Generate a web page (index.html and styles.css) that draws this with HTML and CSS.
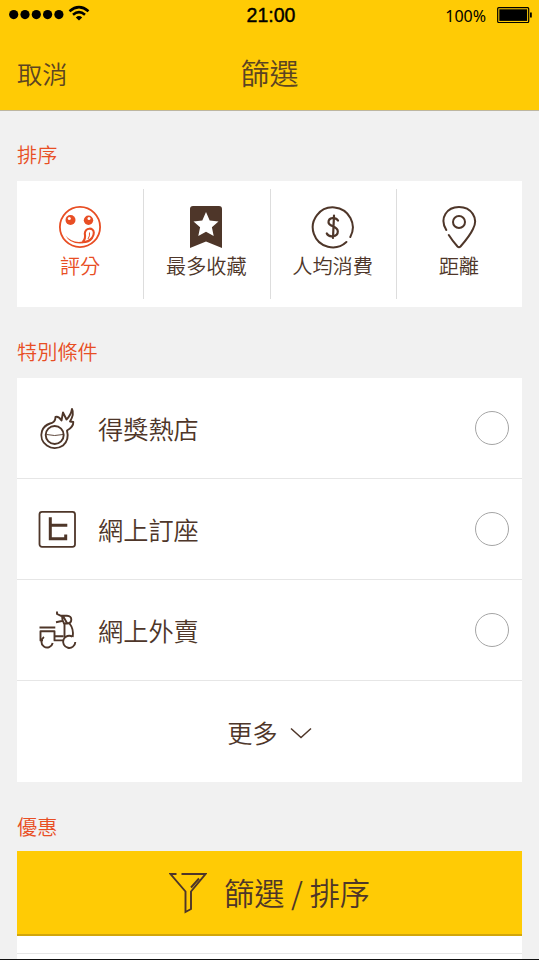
FILE: index.html
```html
<!DOCTYPE html>
<html lang="zh-Hant">
<head>
<meta charset="utf-8">
<title>篩選</title>
<link rel="stylesheet" href="styles.css">
</head>
<body>
<div class="screen">
  <header class="header">
    <div class="status">
      <div class="signal">
        <svg width="84" height="20" viewBox="0 0 84 20">
          <g fill="#000"><circle cx="13.7" cy="14.600" r="4.600"/><circle cx="25" cy="14.600" r="4.600"/><circle cx="36.300" cy="14.600" r="4.600"/><circle cx="47.600" cy="14.600" r="4.600"/><circle cx="58.900" cy="14.600" r="4.600"/></g>
        </svg>
        <svg class="wifi" width="22" height="17" viewBox="0 0 22 17" fill="none" stroke="#000" stroke-width="2.600"><path d="M1.500 6.200Q11-2 20.500 6.200M5 9.700Q11 4.500 17 9.700"/><path d="M11 15.400L7.800 12.400Q11 9.800 14.200 12.400Z" fill="#000" stroke="none"/></svg>
      </div>
      <div class="time">21:00</div>
      <div class="power"><span>100%</span>
        <svg width="35" height="17" viewBox="0 0 35 17"><rect x=".7" y=".7" width="31" height="14.800" rx="1" fill="none" stroke="#000" stroke-width="1.200"/><rect x="2.300" y="2.300" width="27.800" height="11.600" fill="#000"/><path d="M33 5.500h1.800v5H33z"/></svg>
      </div>
    </div>
    <div class="nav"><a class="cancel">取消</a><h1>篩選</h1></div>
  </header>

  <h2>排序</h2>
  <div class="card sorts">
    <div class="sort active">
      <svg width="44" height="44" viewBox="0 0 44 44" fill="none" stroke="currentColor">
        <circle cx="22" cy="22" r="20.100" stroke-width="1.800"/>
        <g fill="currentColor" stroke="none"><circle cx="12.500" cy="15" r="5"/><circle cx="30.500" cy="15.300" r="4.700"/></g>
        <g fill="#fff" stroke="none"><circle cx="11.300" cy="13.400" r="1.500"/><circle cx="31" cy="13.400" r="1.500"/></g>
        <path d="M24.500 37.300Q31 37 34 33Q36 30 35.800 27.500C35.500 22 27.300 22.500 26.800 28.500Q28 34 24.500 37" stroke-width="2.100"/>
        <path d="M7.500 30.500Q14 38.500 25 36.500V38.300Q12 39.500 7.500 30.500Z" fill="currentColor" stroke="none"/><path d="M31.500 27.500Q32 31 30 34" stroke-width="1"/>
      </svg><span>評分</span>
    </div>
    <div class="sort">
      <svg width="44" height="44" viewBox="0 0 44 44"><path d="M6 4Q6 1 9 1H35Q38 1 38 4V43L22 36.500L6 43Z" fill="#4e3629"/><path d="M22 7L25.700 15.600L34.500 16.500L27.900 22.300L29.700 31L22 26.800L14.300 31L16.100 22.300L9.500 16.500L18.300 15.600Z" fill="#fff"/></svg><span>最多收藏</span>
    </div>
    <div class="sort">
      <svg width="44" height="44" viewBox="0 0 44 44" fill="none" stroke="currentColor" stroke-width="2" stroke-linecap="round"><path d="M39.300 32A20 20 0 1 0 35.400 37"/><path d="M27 15.500C25 12 17.500 12 17.500 17.300C17.500 22.200 26.800 20.500 26.800 26.500C26.800 32.500 17.500 32.500 15.800 28.500M23 10.500L22 33" stroke-width="2.200"/></svg><span>人均消費</span>
    </div>
    <div class="sort">
      <svg width="44" height="44" viewBox="0 0 44 44" fill="none" stroke="currentColor" stroke-width="2" stroke-linecap="round"><path d="M9.300 25C2 13 10 2 22 2C34 2 42 13 36 24C33 30.500 27 37.500 23.500 41.500Q22 43 20.500 41.500Q15.500 36 11.800 30"/><circle cx="22" cy="17" r="6"/></svg><span>距離</span>
    </div>
  </div>

  <h2 class="second">特別條件</h2>
  <div class="card">
    <div class="row">
      <svg width="40" height="44" viewBox="0 0 40 44" fill="none" stroke="currentColor" stroke-width="1.900" stroke-linejoin="round"><circle cx="16.700" cy="29" r="9"/><path d="M12 17.500Q17.500 16.500 17.500 11Q20.500 10 23.500 14.500L25 6.500L28.500 13.500Q33 9 34 3Q36.500 8 32 15.500L35.300 16Q35.500 21 29 24.500Q31.500 34 25 39.500C14 47 0 37 4 25Q6 19.500 12 17.500Z"/><path d="M8.500 28.500Q16.500 30.500 25 28.500" stroke-width=".9"/></svg>
      <span class="label">得獎熱店</span><span class="radio"></span>
    </div>
    <div class="row">
      <svg width="40" height="44" viewBox="0 0 40 44" fill="none" stroke="currentColor" stroke-width="1.800"><rect x="1.500" y="4.800" width="35.500" height="35" rx="2.500"/><path d="M12.300 10.200V31.700H27.700V27.500M12.300 18.300H29.300" stroke-width="3"/></svg>
      <span class="label">網上訂座</span><span class="radio"></span>
    </div>
    <div class="row">
      <svg width="40" height="44" viewBox="0 0 40 44" fill="none" stroke="currentColor" stroke-width="1.900" stroke-linejoin="round"><path d="M1.500 19.500H17.300M5 32.400H2.500V23.300H16.500V32.400H26M16.500 28.200H25.500"/><path d="M6 29A5.700 5.700 0 1 0 14.700 35"/><path d="M34.500 28.700A6.100 6.100 0 1 0 37.300 34M26.500 15.500V29.500M31.500 15.500Q36 21 34.700 29"/><path d="M19 3.500V6L22.500 7.700H29C35 7.700 34.500 15.500 29 15.500H26Q24 12 24 7.700M25 8L29 15M18 14.200L25 12.800"/></svg>
      <span class="label">網上外賣</span><span class="radio"></span>
    </div>
    <div class="row more"><span>更多</span><svg width="22" height="13" viewBox="0 0 22 13" fill="none" stroke="currentColor" stroke-width="1.500"><path d="M1 1.500L11 10.500L21 1.500"/></svg></div>
  </div>

  <h2 class="third">優惠</h2>
  <div class="apply">
    <svg width="38" height="42" viewBox="0 0 38 42" fill="none" stroke="currentColor" stroke-width="1.900"><path d="M7.500 2H1.500L16.500 19.500V40L22 37V19.500L36.500 2H12.500M22 15.500L30 6.500"/></svg>
    <span>篩選 / 排序</span>
  </div>
  <div class="card peek"></div>
</div>
</body>
</html>
```
FILE: styles.css
```css
* { box-sizing: border-box; }
body { margin: 0; background: #f1f1f1; color: #4e3629; font-family: "Noto Sans CJK TC", sans-serif; font-weight: 350; }
.screen { height: 960px; overflow: hidden; border-bottom: 1px solid #111; }
svg { display: block; flex: none; }
.header { height: 111px; background: #ffcb05; border-bottom: 1px solid #bdb6a0; }
.status { height: 30px; display: grid; grid-template-columns: 1fr auto 1fr; color: #000; line-height: 30px; }
.signal { display: flex; }
.wifi { margin: 5px 0 0 -16px; }
.time { padding-left: 3px; font: 500 19.5px/31px "Liberation Sans", sans-serif; -webkit-text-stroke: .4px #000; }
.power { display: flex; justify-content: flex-end; gap: 11px; padding-right: 7px; font: 16px/32px "Noto Sans", sans-serif; }
.power svg { margin-top: 7px; }
.nav { height: 80px; display: grid; grid-template-columns: 1fr auto 1fr; align-items: center; padding: 4px 17px 0; }
.cancel { font-size: 25.2px; padding-top: 2px; color: #5c4422; }
h1 { margin: 0; font-size: 29px; font-weight: inherit; color: #5c4422; }
h2 { margin: 0 17px; height: 70px; padding-top: 29px; font-size: 20.2px; line-height: 30px; font-weight: inherit; color: #e84e24; }
.second, .third { height: 71px; padding-top: 30px; }
.third { height: 69px; }
.card { margin: 0 17px; background: #fff; }
.sorts { height: 126px; padding: 8px 0; display: grid; grid-template-columns: repeat(4, 1fr); }
.sort { display: flex; flex-direction: column; align-items: center; padding-top: 16px; font-size: 20.2px; line-height: 30px; }
.sort + .sort { border-left: 1px solid #ddd; padding-right: 1px; }
.sort span { margin-top: 2px; white-space: nowrap; }
.active { color: #e84e24; }
.row { height: 101px; display: flex; align-items: center; padding: 0 13px 0 21px; border-bottom: 1px solid #e6e6e6; font-size: 25.2px; }
.label { margin-left: 20px; flex: 1; }
.radio { width: 34px; height: 34px; border: 1px solid #a5a5a5; border-radius: 50%; }
.more { justify-content: center; gap: 12px; border: 0; padding: 0; }
.more svg { margin-top: 4px; }
.apply { margin: 0 17px; height: 85px; padding-bottom: 1px; background: #ffcb05; border-bottom: 2px solid #d2a60b; display: flex; justify-content: center; align-items: center; gap: 17px; font-size: 30.2px; }
.apply svg { margin-top: 1px; }
.peek { height: 18px; border-bottom: 1px solid #e6e6e6; box-shadow: 0 5px #fff; }
```
